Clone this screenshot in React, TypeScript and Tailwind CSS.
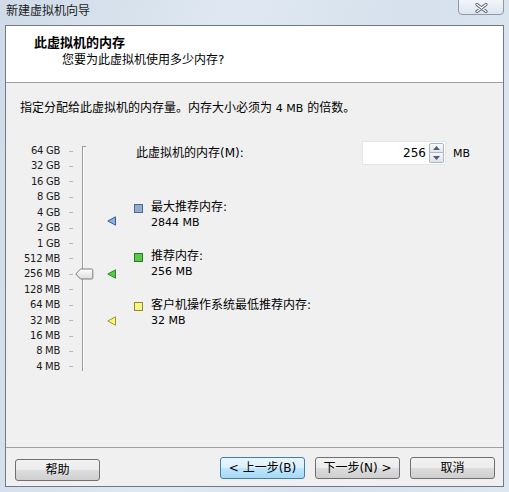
import React from "react";

const ROW = 15.43;
const labels = ["64 GB","32 GB","16 GB","8 GB","4 GB","2 GB","1 GB","512 MB","256 MB","128 MB","64 MB","32 MB","16 MB","8 MB","4 MB"];

function yFor(mb: number) {
  return Math.log2(65536 / mb) * ROW + ROW / 2;
}

function Arrow({ fill, stroke, mb }: { fill: string; stroke: string; mb: number }) {
  return (
    <svg className="absolute left-[101px]" style={{ top: yFor(mb) - 5 }} width="10" height="10" viewBox="0 0 10 10">
      <polygon points="0.8,5 8.5,0.8 8.5,9.2" fill={fill} stroke={stroke} strokeWidth="1" strokeLinejoin="round" />
    </svg>
  );
}

function Btn({ children, active }: { children: React.ReactNode; active?: boolean }) {
  return (
    <button
      className={
        "h-[22px] w-[85px] rounded-[3px] border text-[12px] leading-none text-black " +
        (active
          ? "border-[#3c7fb1] bg-[linear-gradient(#eaf6fd_0%,#d9f0fc_50%,#bee6fd_51%,#a7d9f5_100%)]"
          : "border-[#707070] bg-[linear-gradient(#f2f2f2_0%,#ebebeb_50%,#dddddd_51%,#cfcfcf_100%)]")
      }
    >
      {children}
    </button>
  );
}

function Legend({ color, border, label, value }: { color: string; border: string; label: string; value: string }) {
  return (
    <div className="flex">
      <div className={"mt-[5px] h-[9px] w-[9px] border " + color + " " + border} />
      <div className="ml-[8px] flex flex-col">
        <div className="h-[16px] text-[12px] leading-[16px]">{label}</div>
        <div className="h-[16px] text-[11px] leading-[16px]">{value}</div>
      </div>
    </div>
  );
}

export default function App() {
  return (
    <div className="flex h-[492px] w-[509px] flex-col overflow-hidden bg-[linear-gradient(100deg,#cfdbe8_0%,#dfe8f2_40%,#d6e1ed_70%,#dde7f2_100%)] [font-family:'DejaVu_Sans','Noto_Sans_CJK_SC',sans-serif] text-[#000]">
      {/* title bar */}
      <div className="relative flex h-[25px] shrink-0 items-start">
        <div className="ml-[6px] mt-[3px] text-[12px] leading-[16px] text-[#1b1b1b]">新建虚拟机向导</div>
        <div className="absolute right-[5px] top-[-2px] flex h-[17px] w-[46px] items-center justify-center rounded-b-[4px] border border-[#8d99a8] bg-[linear-gradient(#f4f7fb,#dde5ef)] pt-[2px]">
          <svg width="13" height="10" viewBox="0 0 13 10">
            <path d="M2 1.5 L11 8.5 M11 1.5 L2 8.5" stroke="#5a6474" strokeWidth="3.2" strokeLinecap="round" />
            <path d="M2 1.5 L11 8.5 M11 1.5 L2 8.5" stroke="#ffffff" strokeWidth="1.4" strokeLinecap="round" />
          </svg>
        </div>
      </div>

      {/* client */}
      <div className="mx-[5px] mb-[5px] flex flex-1 flex-col border border-[#6f7a86]">
        {/* header */}
        <div className="h-[57px] shrink-0 border-b border-[#a0a0a0] bg-white">
          <div className="ml-[28px] mt-[8px] text-[13px] font-bold leading-[17px]">此虚拟机的内存</div>
          <div className="ml-[56px] mt-[1px] text-[12px] leading-[16px]">您要为此虚拟机使用多少内存?</div>
        </div>

        {/* body */}
        <div className="flex flex-1 flex-col bg-[#f0f0f0]">
          <div className="ml-[14px] mt-[17px] h-[16px] text-[12px] leading-[16px]">
            指定分配给此虚拟机的内存量。内存大小必须为 <span className="text-[11px]">4 MB</span> 的倍数。
          </div>

          <div className="mt-[25px] flex items-start">
            {/* slider */}
            <div className="relative mt-[2.3px] h-[232px] w-[120px]">
              <div className="flex flex-col">
                {labels.map((l) => (
                  <div key={l} className="flex h-[15.43px] items-center">
                    <div className="w-[54px] text-right text-[10px] leading-none tracking-[-0.3px] text-[#1a1a1a]">{l}</div>
                    <div className="ml-[9px] h-px w-[4px] bg-[#b9b9b9]" />
                  </div>
                ))}
              </div>
              {/* track */}
              <div className="absolute left-[76px] top-[3px] h-[225px] w-[2px] border-l border-[#9a9a9a] bg-white" />
              <div className="absolute left-[76px] top-[3px] h-px w-[4px] bg-[#9a9a9a]" />
              {/* thumb */}
              <svg className="absolute left-[69px]" style={{ top: yFor(256) - 6 }} width="19" height="12" viewBox="0 0 19 12">
                <defs>
                  <linearGradient id="th" x1="0" y1="0" x2="0" y2="1">
                    <stop offset="0" stopColor="#ffffff" />
                    <stop offset="1" stopColor="#dcdcdc" />
                  </linearGradient>
                </defs>
                <path d="M0.8 6 L5.5 1 H16.5 Q17.8 1 17.8 2.3 V9.7 Q17.8 11 16.5 11 H5.5 Z" fill="url(#th)" stroke="#7b7b7b" strokeWidth="1" />
              </svg>
              <Arrow mb={2844} fill="#8bb0e6" stroke="#3b5f9c" />
              <Arrow mb={256} fill="#58cc4a" stroke="#2c8a24" />
              <Arrow mb={32} fill="#fbf47a" stroke="#9e9830" />
            </div>

            {/* right panel */}
            <div className="ml-[8px] flex flex-col">
              <div className="flex h-[24px] items-center">
                <div className="ml-[2px] w-[226px] text-[12px] leading-[16px]">此虚拟机的内存(M):</div>
                <div className="flex h-[24px] w-[84px] items-center border border-[#e3e6ea] bg-white">
                  <div className="flex-1 pr-[3px] text-right text-[12px] leading-none">256</div>
                  <div className="mr-[1px] flex h-[20px] w-[15px] flex-col">
                    <div className="flex h-[10px] items-center justify-center rounded-t-[2px] border border-[#a8b6c8] bg-[linear-gradient(#fbfcfd,#e1e6ec)]">
                      <svg width="7" height="4" viewBox="0 0 7 4"><polygon points="3.5,0 7,4 0,4" fill="#4e5d78" /></svg>
                    </div>
                    <div className="flex h-[10px] items-center justify-center rounded-b-[2px] border border-t-0 border-[#a8b6c8] bg-[linear-gradient(#f5f7f9,#dfe4ea)]">
                      <svg width="7" height="4" viewBox="0 0 7 4"><polygon points="0,0 7,0 3.5,4" fill="#4e5d78" /></svg>
                    </div>
                  </div>
                </div>
                <div className="ml-[7px] text-[11px] leading-none">MB</div>
              </div>

              <div className="mt-[34px] flex flex-col gap-[17px]">
                <Legend color="bg-[#93acd0]" border="border-[#4a6791]" label="最大推荐内存:" value="2844 MB" />
                <Legend color="bg-[#58c84a]" border="border-[#2b7d22]" label="推荐内存:" value="256 MB" />
                <Legend color="bg-[#fbf681]" border="border-[#8e8a3a]" label="客户机操作系统最低推荐内存:" value="32 MB" />
              </div>
            </div>
          </div>
        </div>

        {/* footer */}
        <div className="flex h-[39px] shrink-0 items-start border-t border-[#a0a0a0] bg-[#f0f0f0] pt-[9px]">
          <div className="ml-[9px]">
            <Btn>帮助</Btn>
          </div>
          <div className="ml-auto mr-[8px] flex gap-[10px]">
            <Btn active>&lt; 上一步(B)</Btn>
            <Btn>下一步(N) &gt;</Btn>
            <Btn>取消</Btn>
          </div>
        </div>
      </div>
    </div>
  );
}
